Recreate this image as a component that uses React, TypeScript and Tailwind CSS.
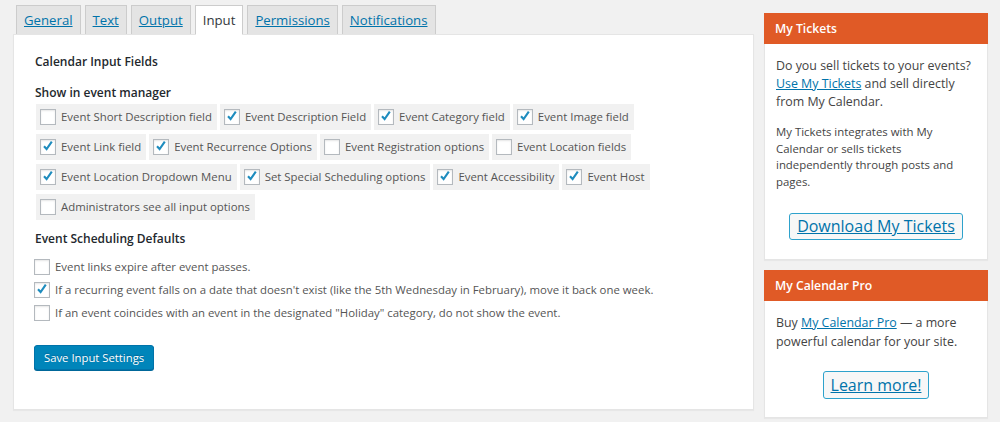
import React from 'react';

type Opt = { label: string; checked: boolean };

const rows: Opt[][] = [
  [
    { label: 'Event Short Description field', checked: false },
    { label: 'Event Description Field', checked: true },
    { label: 'Event Category field', checked: true },
    { label: 'Event Image field', checked: true },
  ],
  [
    { label: 'Event Link field', checked: true },
    { label: 'Event Recurrence Options', checked: true },
    { label: 'Event Registration options', checked: false },
    { label: 'Event Location fields', checked: false },
  ],
  [
    { label: 'Event Location Dropdown Menu', checked: true },
    { label: 'Set Special Scheduling options', checked: true },
    { label: 'Event Accessibility', checked: true },
    { label: 'Event Host', checked: true },
  ],
  [{ label: 'Administrators see all input options', checked: false }],
];

const defaults: Opt[] = [
  { label: 'Event links expire after event passes.', checked: false },
  {
    label:
      "If a recurring event falls on a date that doesn't exist (like the 5th Wednesday in February), move it back one week.",
    checked: true,
  },
  {
    label: 'If an event coincides with an event in the designated "Holiday" category, do not show the event.',
    checked: false,
  },
];

const tabs = ['General', 'Text', 'Output', 'Input', 'Permissions', 'Notifications'];

const Box: React.FC<{ checked: boolean }> = ({ checked }) => (
  <span className="relative w-4 h-4 shrink-0 bg-white border border-[#b4b9be] shadow-[inset_0_1px_2px_rgba(0,0,0,0.1)]">
    {checked && (
      <svg viewBox="0 0 16 16" className="absolute -left-[1px] -top-[2px] w-4 h-4">
        <path d="M4 8.2 L6.6 11 L11.8 3.6" fill="none" stroke="#1e8cbe" strokeWidth="2.1" />
      </svg>
    )}
  </span>
);

const Sidebar: React.FC = () => (
  <div className="w-[224px] ml-[10px] mt-[13px] flex flex-col gap-[10px]">
    <div className="bg-white border border-[#e5e5e5] shadow-[0_1px_1px_rgba(0,0,0,0.04)]">
      <h3 className="bg-[#e05a26] text-white font-semibold text-[12.2px] h-[31px] leading-[31px] px-[11px] -mt-px -mx-px">My Tickets</h3>
      <div className="pl-[11px] pr-[8px] pt-[13px] pb-[19px]">
        <p className="text-[12.4px] leading-[18px] text-[#444]">
          Do you sell tickets to your events? <a href="#" className="text-[#0073aa] underline">Use My Tickets</a> and sell directly from My Calendar.
        </p>
        <p className="text-[11.4px] leading-[16.7px] text-[#444] mt-[13px] pr-[3px]">
          My Tickets integrates with My Calendar or sells tickets independently through posts and pages.
        </p>
        <div className="flex justify-center mt-[22px] pr-[3px]">
          <a href="#" className="text-[16px] leading-[25px] text-[#0073aa] underline border border-[#2ea2cc] rounded-[3px] bg-[#f7f7f7] px-[7px]">
            Download My Tickets
          </a>
        </div>
      </div>
    </div>
    <div className="bg-white border border-[#e5e5e5] shadow-[0_1px_1px_rgba(0,0,0,0.04)]">
      <h3 className="bg-[#e05a26] text-white font-semibold text-[12.2px] h-[31px] leading-[31px] px-[11px] -mt-px -mx-px">My Calendar Pro</h3>
      <div className="px-[11px] pt-[12px] pb-[18px]">
        <p className="text-[12.4px] leading-[19px] text-[#444]">
          Buy <a href="#" className="text-[#0073aa] underline">My Calendar Pro</a> — a more powerful calendar for your site.
        </p>
        <div className="flex justify-center mt-[20px]">
          <a href="#" className="text-[16px] leading-[26px] text-[#0073aa] underline border border-[#2ea2cc] rounded-[3px] bg-[#f7f7f7] px-[7px]">
            Learn more!
          </a>
        </div>
      </div>
    </div>
  </div>
);

export default function App() {
  return (
    <div className="w-[1000px] h-[422px] bg-[#f1f1f1] flex font-['Open_Sans',sans-serif] text-[#444] overflow-hidden">
      <div className="w-[741px] ml-[13px] flex flex-col">
        <nav className="flex gap-[4px] pl-[3px] pt-[5px]">
          {tabs.map((t) => {
            const active = t === 'Input';
            return (
              <span
                key={t}
                className={
                  active
                    ? 'relative z-10 -mb-px h-[30px] leading-[28px] px-[7px] border border-[#ccc] border-b-white bg-white text-[13.2px] text-[#32373c]'
                    : 'h-[29px] leading-[28px] px-[7px] border border-b-0 border-[#ccc] bg-[#e4e4e4] text-[13.2px] text-[#0073aa] underline'
                }
              >
                {t}
              </span>
            );
          })}
        </nav>
        <div className="h-[376px] bg-white border border-[#e5e5e5] shadow-[0_1px_1px_rgba(0,0,0,0.04)] pl-[21px] pt-[18px]">
          <h2 className="text-[12px] leading-[18px] font-semibold text-[#23282d]">Calendar Input Fields</h2>
          <h3 className="mt-[13px] text-[12px] leading-[18px] font-semibold text-[#23282d]">Show in event manager</h3>
          <div className="mt-[2px] flex flex-col gap-[4px]">
            {rows.map((r, i) => (
              <div key={i} className="flex gap-[3px] ml-[1px]">
                {r.map((o) => (
                  <label key={o.label} className="h-[26px] flex items-center gap-[5px] bg-[#f1f1f1] pl-[4px] pr-[5px] text-[11.4px] text-[#555]">
                    <Box checked={o.checked} />
                    <span>{o.label}</span>
                  </label>
                ))}
              </div>
            ))}
          </div>
          <h3 className="mt-[10px] text-[12px] leading-[18px] font-semibold text-[#23282d]">Event Scheduling Defaults</h3>
          <div className="mt-[11px] flex flex-col gap-[7px] -ml-[1px]">
            {defaults.map((o) => (
              <label key={o.label} className="h-[16px] flex items-center gap-[5px] text-[11.4px] leading-[16px] text-[#555]">
                <Box checked={o.checked} />
                <span>{o.label}</span>
              </label>
            ))}
          </div>
          <button className="block mt-[24px] -ml-[1px] h-[25px] px-[9px] bg-[#0085ba] border border-[#0073aa] rounded-[3px] shadow-[0_1px_0_#006799] text-white text-[11.3px] leading-[22px] [text-shadow:0_-1px_1px_#006799]">
            Save Input Settings
          </button>
        </div>
      </div>
      <Sidebar />
    </div>
  );
}
